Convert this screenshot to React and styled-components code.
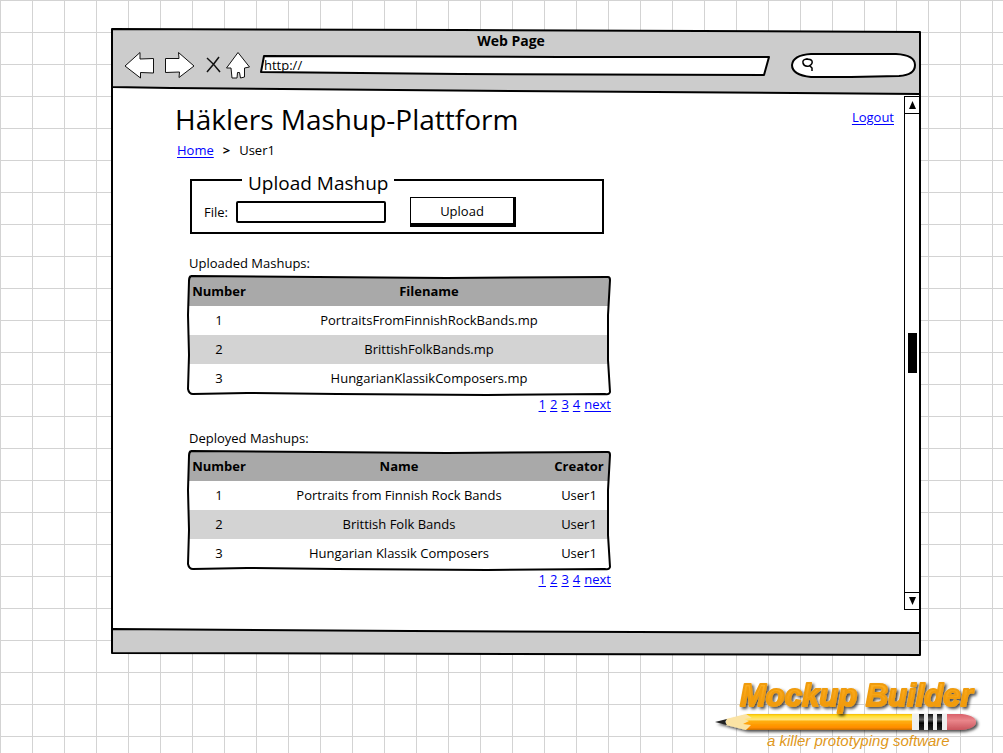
import React from "react";
import styled, { createGlobalStyle } from "styled-components";

const GlobalStyle = createGlobalStyle`
  * { box-sizing: border-box; }
  html, body { margin: 0; }
  body {
    min-height: 100vh;
    background-color: #fff;
    background-image:
      linear-gradient(#d3d3d3 1px, transparent 1px),
      linear-gradient(90deg, #d3d3d3 1px, transparent 1px);
    background-size: 32px 32px;
    color: #000;
    font: 13px/20px "Comic Sans MS", "Open Sans", "Noto Sans", sans-serif;
  }
  button, input { font: inherit; color: inherit; }
`;

const Canvas = styled.div`
  padding: 28px 82px 0 111px;
`;

const Sheet = styled.div`
  display: flex;
  flex-direction: column;
`;

const Drawing = styled.svg`
  position: absolute;
  inset: 0;
  width: 100%;
  height: 100%;
  z-index: -1;
  overflow: visible;
  pointer-events: none;
  fill: none;
  stroke: #000;
  stroke-width: 2px;
  stroke-linejoin: round;

  path { vector-effect: non-scaling-stroke; }
`;

function Sketch({ w, h, children }) {
  return (
    <Drawing viewBox={`0 0 ${w} ${h}`} preserveAspectRatio="none" aria-hidden="true">
      {children}
    </Drawing>
  );
}

const Toolbar = styled.header`
  position: relative;
  isolation: isolate;
  height: 66px;
  padding: 3px 5px 0 13px;
`;

const WindowTitle = styled.div`
  padding-right: 18px;
  text-align: center;
  font-size: 14px;
  font-weight: 700;
`;

const NavRow = styled.div`
  display: flex;
  align-items: center;
  height: 28px;
`;

const NavButton = styled.button`
  display: flex;
  padding: 0;
  border: 0;
  background: none;
  margin-right: ${(p) => p.$gap}px;

  svg { display: block; overflow: visible; }
`;

const Address = styled.label`
  position: relative;
  isolation: isolate;
  display: flex;
  flex: 1;
  min-width: 0;
  height: 20px;
  margin-right: 21px;
`;

const Search = styled(Address)`
  flex: 0 0 125px;
  height: 25px;
  margin-right: 0;
  padding: 5px 14px 5px 10px;
`;

const BareInput = styled.input`
  flex: 1;
  width: 0;
  min-width: 0;
  padding: 0 4px;
  border: 0;
  outline: 0;
  background: transparent;
  line-height: 16px;
`;

const Body = styled.div`
  display: flex;
  border: solid #000;
  border-width: 0 2px;
  background: #fff;
`;

const Page = styled.main`
  flex: 1;
  min-width: 0;
  padding: 5px 10px 40px 62px;
`;

const PageHeader = styled.div`
  display: flex;
  justify-content: space-between;
  align-items: flex-start;
`;

const Heading = styled.h1`
  margin: 0;
  font-size: 28px;
  line-height: 40px;
  font-weight: 400;
`;

const Link = styled.a`
  color: #00f;
  text-decoration: underline;
  text-underline-offset: 2px;
`;

const LogoutSlot = styled.div`
  padding-top: 8px;
`;

const Crumbs = styled.nav`
  display: flex;
  gap: 9px;
  padding: 1px 0 0 2px;
`;

const Column = styled.div`
  display: flex;
  flex-direction: column;
  max-width: 436px;
  padding-left: 12px;
`;

const UploadBox = styled.fieldset`
  min-width: 0;
  margin: 6px 7px 4px 3px;
  padding: 3px 12px 5px;
  border: 2px solid #000;
`;

const Legend = styled.legend`
  margin-left: 38px;
  padding: 6px 6px 0;
  font-size: 19px;
  line-height: 22px;
`;

const UploadRow = styled.div`
  display: flex;
  align-items: center;
`;

const FileLabel = styled.label`
  width: 32px;
`;

const FileInput = styled.input`
  width: 150px;
  height: 22px;
  margin-right: 24px;
  padding: 0 4px;
  border: 2px solid #000;
  border-radius: 2px;
  background: #fff;
`;

const UploadButton = styled.button`
  width: 106px;
  height: 30px;
  padding: 0;
  border: solid #000;
  border-width: 1px 3px 4px 1px;
  background: #fff;
`;

const Section = styled.section`
  margin-top: 15px;
`;

const SectionTitle = styled.h2`
  margin: 0 0 2px 2px;
  font-size: 13px;
  line-height: 20px;
  font-weight: 400;
`;

const TableFrame = styled.div`
  position: relative;
  isolation: isolate;
  padding: 2px;
`;

const FrameLine = styled(Drawing)`
  z-index: 1;
`;

const Table = styled.table`
  width: 100%;
  table-layout: fixed;
  border-collapse: collapse;
  text-align: center;

  th, td {
    height: 29px;
    padding: 0 0 2px;
  }
  th { background: #a9a9a9; font-weight: 700; }
  tbody tr:nth-child(even) { background: #d3d3d3; }
`;

const Col = styled.col`
  width: ${(p) => p.$width};
`;

const Pager = styled.nav`
  display: flex;
  justify-content: flex-end;
  gap: 4px;
  line-height: 18px;
`;

const Scrollbar = styled.div`
  display: flex;
  flex-direction: column;
  width: 15px;
  margin: 2px 0 18px;
  border: 1px solid #000;
  border-right: 0;
`;

const ScrollButton = styled.button`
  display: grid;
  place-items: center;
  height: 17px;
  padding: 0;
  border: solid #000;
  border-width: ${(p) => (p.$down ? "1px 0 0" : "0 0 1px")};
  background: #fff;
`;

const Track = styled.div`
  display: flex;
  flex: 1;
  flex-direction: column;
  align-items: center;
  justify-content: center;
`;

const Thumb = styled.div`
  width: 9px;
  height: 40px;
  background: #000;
`;

const StatusBar = styled.footer`
  position: relative;
  isolation: isolate;
  height: 28px;
`;

const Brand = styled.div`
  display: flex;
  justify-content: flex-end;
  padding: 22px 18px 0 0;

  svg { display: block; }
`;

function DataTable({ title, columns, rows }) {
  return (
    <Section>
      <SectionTitle>{title}</SectionTitle>
      <TableFrame>
        <Table aria-label={title}>
          <colgroup>
            {columns.map((c) => <Col key={c.name} $width={c.width} />)}
          </colgroup>
          <thead>
            <tr>{columns.map((c) => <th key={c.name} scope="col">{c.name}</th>)}</tr>
          </thead>
          <tbody>
            {rows.map((row) => (
              <tr key={row[0]}>{row.map((cell) => <td key={cell}>{cell}</td>)}</tr>
            ))}
          </tbody>
        </Table>
        <FrameLine viewBox="0 0 424 120" preserveAspectRatio="none" aria-hidden="true">
          <path d="M4 1 L130 2 L260 3 L421 2 Q423 2 423 5 L421 40 L421 85 L423 117 Q422 120 418 119 L300 120 L150 119 L60 118 L6 119 Q2 119 1 114 L2 80 L1 40 L2 6 Q2 2 4 1" />
        </FrameLine>
      </TableFrame>
      <Pager aria-label={`${title} pages`}>
        {["1", "2", "3", "4", "next"].map((p) => <Link key={p} href="#">{p}</Link>)}
      </Pager>
    </Section>
  );
}

function Logo() {
  return (
    <svg width="270" height="75" viewBox="0 0 270 75" role="img" aria-label="Mockup Builder">
      <defs>
        <linearGradient id="wood" x1="0" y1="0" x2="0" y2="1">
          <stop offset="0" stopColor="#f5b800" />
          <stop offset="0.12" stopColor="#ffdf2e" />
          <stop offset="0.34" stopColor="#ffe47c" />
          <stop offset="0.46" stopColor="#ffae0c" />
          <stop offset="0.85" stopColor="#ff8c00" />
          <stop offset="1" stopColor="#c96f00" />
        </linearGradient>
        <linearGradient id="rubber" x1="0" y1="0" x2="0" y2="1">
          <stop offset="0" stopColor="#d9606a" />
          <stop offset="0.4" stopColor="#ea868b" />
          <stop offset="1" stopColor="#c9545c" />
        </linearGradient>
        <linearGradient id="band" x1="0" y1="0" x2="0" y2="1">
          <stop offset="0" stopColor="#111" />
          <stop offset="0.35" stopColor="#666" />
          <stop offset="0.55" stopColor="#000" />
          <stop offset="1" stopColor="#222" />
        </linearGradient>
        <linearGradient id="lettering" x1="0" y1="0" x2="0" y2="1">
          <stop offset="0" stopColor="#ffb52a" />
          <stop offset="1" stopColor="#ee9200" />
        </linearGradient>
        <filter id="drop" x="-5%" y="-20%" width="112%" height="160%">
          <feDropShadow dx="2" dy="2" stdDeviation="1.5" floodColor="#000" floodOpacity="0.7" />
        </filter>
      </defs>
      <g filter="url(#drop)">
        <path d="M31 36 L11 41 V47 L31 52 L36 49 L38 40 Z" fill="#fbe3a4" />
        <path d="M31 36 H198 V52 H31 L36 47 L28 46 L34 43 L29 41 L37 40 Z" fill="url(#wood)" />
        <path d="M0 44 L12 41 L10 44 L12 47 Z" fill="#222" />
        <path d="M197 36 H233 V52 H197 Z" fill="#eeeeee" />
        <path d="M204 36 h5 v16 h-5 Z M213 36 h5 v16 h-5 Z M222 36 h5 v16 h-5 Z" fill="url(#band)" />
        <path d="M232 36 H247 Q261 38 261 44 Q261 50 247 52 H232 Z" fill="url(#rubber)" />
      </g>
      <text
        x="25" y="28" filter="url(#drop)" fill="url(#lettering)" stroke="#f09c10" strokeWidth="2"
        strokeLinejoin="round" fontFamily="'Liberation Sans', Arial, sans-serif"
        fontSize="31" fontWeight="700" fontStyle="italic"
      >
        Mockup Builder
      </text>
      <text
        x="52" y="68" fill="#e0981c" fontFamily="'Liberation Sans', Arial, sans-serif"
        fontSize="15" fontStyle="italic"
      >
        a killer prototyping software
      </text>
    </svg>
  );
}

const uploaded = [
  ["1", "PortraitsFromFinnishRockBands.mp"],
  ["2", "BrittishFolkBands.mp"],
  ["3", "HungarianKlassikComposers.mp"],
];

const deployed = [
  ["1", "Portraits from Finnish Rock Bands", "User1"],
  ["2", "Brittish Folk Bands", "User1"],
  ["3", "Hungarian Klassik Composers", "User1"],
];

const iconProps = { fill: "#fff", stroke: "#111", strokeWidth: 1, "aria-hidden": true };

export default function App() {
  return (
    <>
      <GlobalStyle />
      <Canvas>
        <Sheet>
          <Toolbar>
            <Sketch w={810} h={66}>
              <path d="M1 58 L809 65 V66 H1 Z" fill="#fff" stroke="none" />
              <path d="M1 1 L350 2 L809 4 L809 66 L400 63 L60 60 L1 59 Z" fill="#ccc" />
              <path d="M1 59 V66" />
            </Sketch>
            <WindowTitle>Web Page</WindowTitle>
            <NavRow>
              <NavButton type="button" aria-label="Back" $gap={10}>
                <svg width="30" height="26" {...iconProps}>
                  <path d="M1 14 L16 0.5 L16 7 L29.5 6.5 L29.5 21 L16.5 20.5 L16.5 26 Z" />
                </svg>
              </NavButton>
              <NavButton type="button" aria-label="Forward" $gap={12}>
                <svg width="30" height="26" {...iconProps}>
                  <path d="M1.5 6.5 H15 L14.5 0.5 L30 14 L15 25.5 L15.5 20 L1.5 20.5 Z" />
                </svg>
              </NavButton>
              <NavButton type="button" aria-label="Stop" $gap={6}>
                <svg width="14" height="16" {...iconProps} fill="none" strokeWidth="1.5">
                  <path d="M1 1 Q8 7 14 15 M13 0 Q8 7 1 15" />
                </svg>
              </NavButton>
              <NavButton type="button" aria-label="Home" $gap={10}>
                <svg width="24" height="26" {...iconProps}>
                  <path d="M12 0.5 L23.5 15 L18.5 16 L18.5 25 L14.5 26 L13.5 20.5 H11.5 L11 26 H6 L5 16 L0.5 16 Z" />
                </svg>
              </NavButton>
              <Address>
                <Sketch w={510} h={20}>
                  <path d="M4 1 L300 2 L509 2 L504 20 L200 19 L1 17 Z" fill="#fff" />
                </Sketch>
                <BareInput aria-label="Address" defaultValue="http://" />
              </Address>
              <Search>
                <Sketch w={125} h={25}>
                  <path d="M20 1 H105 Q124 2 124 12 Q124 22 108 23 L60 24 H20 Q1 22 1 12 Q2 2 20 1 Z" fill="#fff" />
                </Sketch>
                <svg width="14" height="14" fill="none" stroke="#000" strokeWidth="1.5" aria-hidden="true">
                  <path d="M7 1 Q1 1 2 5 Q3 9 8 8 Q12 6 11 3 Q10 1 5 1 M9 8 L11 10 L11 13" />
                </svg>
                <BareInput aria-label="Search" />
              </Search>
            </NavRow>
          </Toolbar>

          <Body>
            <Page>
              <PageHeader>
                <Heading>Häklers Mashup-Plattform</Heading>
                <LogoutSlot><Link href="#">Logout</Link></LogoutSlot>
              </PageHeader>
              <Crumbs aria-label="Breadcrumb">
                <Link href="#">Home</Link>
                <b>&gt;</b>
                <span>User1</span>
              </Crumbs>
              <Column>
                <UploadBox>
                  <Legend>Upload Mashup</Legend>
                  <UploadRow>
                    <FileLabel htmlFor="file">File:</FileLabel>
                    <FileInput id="file" type="text" />
                    <UploadButton type="button">Upload</UploadButton>
                  </UploadRow>
                </UploadBox>
                <DataTable
                  title="Uploaded Mashups:"
                  columns={[{ name: "Number", width: "60px" }, { name: "Filename", width: "auto" }]}
                  rows={uploaded}
                />
                <DataTable
                  title="Deployed Mashups:"
                  columns={[
                    { name: "Number", width: "60px" },
                    { name: "Name", width: "auto" },
                    { name: "Creator", width: "60px" },
                  ]}
                  rows={deployed}
                />
              </Column>
            </Page>
            <Scrollbar>
              <ScrollButton type="button" aria-label="Scroll up">
                <svg width="7" height="8" aria-hidden="true"><path d="M3.5 0 L7 8 H0 Z" /></svg>
              </ScrollButton>
              <Track><Thumb /></Track>
              <ScrollButton type="button" aria-label="Scroll down" $down>
                <svg width="7" height="8" aria-hidden="true"><path d="M3.5 8 L7 0 H0 Z" /></svg>
              </ScrollButton>
            </Scrollbar>
          </Body>

          <StatusBar>
            <Sketch w={810} h={28}>
              <path d="M1 0 H809 V6 H1 Z" fill="#fff" stroke="none" />
              <path d="M1 1 L300 3 L809 5 L809 27 L400 26 L1 25 Z" fill="#ccc" />
              <path d="M809 0 V5 M1 0 V2" />
            </Sketch>
          </StatusBar>
        </Sheet>
      </Canvas>
      <Brand><Logo /></Brand>
    </>
  );
}
